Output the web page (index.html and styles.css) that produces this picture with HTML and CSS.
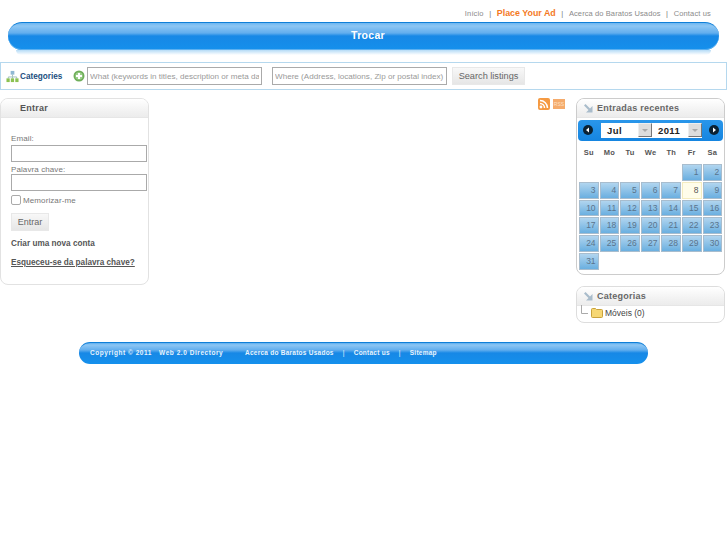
FILE: index.html
```html
<!DOCTYPE html>
<html lang="pt">
<head>
<meta charset="utf-8">
<title>Trocar</title>
<link rel="stylesheet" href="styles.css">
</head>
<body>
<nav class="topnav">
  <a class="nav-link">Início</a><span class="sep">|</span>
  <a class="nav-ad">Place Your Ad</a><span class="sep">|</span>
  <a class="nav-link nav-long">Acerca do Baratos Usados</a><span class="sep">|</span>
  <a class="nav-link">Contact us</a>
</nav>
<header class="banner"><h1 class="banner-title">Trocar</h1></header>
<div class="banner-shadow"></div>

<form class="search">
  <svg class="cat-icon" width="13" height="13" viewBox="0 0 14 14"><rect x="5" y="1" width="4" height="4" fill="#8fb8d4"/><path d="M7 5v2M2.500 9V7.500h9V9M7 7v2" stroke="#9bb" fill="none"/><rect x="0.500" y="9" width="3.500" height="4" fill="#8cc152"/><rect x="5.200" y="9" width="3.500" height="4" fill="#8cc152"/><rect x="10" y="9" width="3.500" height="4" fill="#8cc152"/></svg>
  <a class="cat-link">Categories</a>
  <svg class="plus-icon" width="12" height="12" viewBox="0 0 12 12"><circle cx="6" cy="6" r="5.500" fill="#6fae5a"/><circle cx="6" cy="6" r="3.800" fill="#9ccf8a"/><path d="M6 3v6M3 6h6" stroke="#fff" stroke-width="2"/></svg>
  <input class="field field-what" placeholder="What (keywords in titles, description or meta data)">
  <input class="field field-where" placeholder="Where (Address, locations, Zip or postal index)">
  <button class="btn btn-search" type="button">Search listings</button>
</form>

<main class="columns">
  <aside class="box box-login">
    <h2 class="box-head box-head-login">Entrar</h2>
    <div class="login-body">
      <label class="lbl lbl-email">Email:</label>
      <input class="login-input">
      <label class="lbl">Palavra chave:</label>
      <input class="login-input">
      <label class="remember"><span class="check"></span>Memorizar-me</label>
      <button class="btn btn-login" type="button">Entrar</button>
      <a class="login-new">Criar uma nova conta</a>
      <a class="login-forgot">Esqueceu-se da palavra chave?</a>
    </div>
  </aside>

  <section class="middle">
    <svg width="12" height="12" viewBox="0 0 12 12"><rect width="12" height="12" rx="2" fill="#f59a42"/><circle cx="3" cy="9" r="1.400" fill="#fff"/><path d="M2 5.500a4.500 4.500 0 0 1 4.500 4.500M2 2.500a7.500 7.500 0 0 1 7.500 7.500" stroke="#fff" stroke-width="1.500" fill="none"/></svg>
    <span class="rss-badge">RSS</span>
  </section>

  <aside class="right">
    <section class="box box-cal">
      <h2 class="box-head"><svg class="arrow" width="9" height="9" viewBox="0 0 9 9"><path d="M0 1.500 1.500 0 6 4.500 8.500 2v6.500H2L4.500 6z" fill="#a9bccb"/></svg>Entradas recentes</h2>
      <div class="cal-top">
        <span class="cal-nav"><svg width="10" height="10" viewBox="0 0 10 10"><circle cx="5" cy="5" r="5" fill="#0b2233"/><path d="M6 2.500v5L3 5z" fill="#fff"/></svg></span>
        <span class="cal-select cal-month">Jul<span class="cal-spin"><i></i></span></span>
        <span class="cal-select cal-year">2011<span class="cal-spin"><i></i></span></span>
        <span class="cal-nav"><svg width="10" height="10" viewBox="0 0 10 10"><circle cx="5" cy="5" r="5" fill="#0b2233"/><path d="M4 2.500v5L7 5z" fill="#fff"/></svg></span>
      </div>
      <div class="cal-grid">
        <span class="dow">Su</span><span class="dow">Mo</span><span class="dow">Tu</span><span class="dow">We</span><span class="dow">Th</span><span class="dow">Fr</span><span class="dow">Sa</span>
        <span class="blank"></span><span class="blank"></span><span class="blank"></span><span class="blank"></span><span class="blank"></span><span class="day">1</span><span class="day">2</span>
        <span class="day">3</span><span class="day">4</span><span class="day">5</span><span class="day">6</span><span class="day">7</span><span class="day today">8</span><span class="day">9</span>
        <span class="day">10</span><span class="day">11</span><span class="day">12</span><span class="day">13</span><span class="day">14</span><span class="day">15</span><span class="day">16</span>
        <span class="day">17</span><span class="day">18</span><span class="day">19</span><span class="day">20</span><span class="day">21</span><span class="day">22</span><span class="day">23</span>
        <span class="day">24</span><span class="day">25</span><span class="day">26</span><span class="day">27</span><span class="day">28</span><span class="day">29</span><span class="day">30</span>
        <span class="day">31</span>
      </div>
    </section>
    <section class="box box-cats">
      <h2 class="box-head"><svg class="arrow" width="9" height="9" viewBox="0 0 9 9"><path d="M0 1.500 1.500 0 6 4.500 8.500 2v6.500H2L4.500 6z" fill="#a9bccb"/></svg>Categorias</h2>
      <div class="cat-row">
        <svg class="tree" width="7" height="9" viewBox="0 0 7 9"><path d="M.5 0v8.500H7" stroke="#aaa" fill="none"/></svg>
        <svg class="folder" width="12" height="11" viewBox="0 0 12 11"><path d="M.5 2.500a1 1 0 0 1 1-1h3l1 1h5a1 1 0 0 1 1 1v6a1 1 0 0 1-1 1h-9a1 1 0 0 1-1-1z" fill="#f6d774" stroke="#c9a23c"/></svg>
        <span>Móveis (0)</span>
      </div>
    </section>
  </aside>
</main>

<footer class="footer">
  <span class="foot-copy">Copyright © 2011 &nbsp; Web 2.0 Directory</span>
  <a>Acerca do Baratos Usados</a><span class="foot-sep">|</span><a>Contact us</a><span class="foot-sep">|</span><a>Sitemap</a>
</footer>
</body>
</html>
```
FILE: styles.css
```css
* { box-sizing: border-box; }
html, body { margin: 0; padding: 0; }
body {
  background: #fff;
  font-family: "Liberation Sans", Arial, sans-serif;
  font-size: 8px;
  color: #666;
  width: 727px;
  height: 545px;
  overflow: hidden;
}
.topnav {
  display: flex;
  justify-content: flex-end;
  align-items: center;
  height: 22px;
  padding: 4px 16px 0 0;
  font-size: 7.500px;
  letter-spacing: .15px;
  color: #888;
}
.sep { margin: 0 5.500px; color: #777; }
.nav-link { color: #8a8a8a; }
.nav-long { letter-spacing: .1px; }
.nav-ad { color: #f47a1f; font-weight: bold; font-size: 8.900px; letter-spacing: 0; }
.banner {
  margin: 0 8px;
  height: 28px;
  width: 711px;
  border-radius: 14px;
  border-top: 1px solid #0f7fd8;
  background: linear-gradient(#6db6f0 0, #8cc6f4 3px, #62aeee 10px, #1788e6 13px, #1590ec 100%);
  display: flex;
  align-items: center;
  justify-content: center;
  box-shadow: inset 0 -1px 0 #5cb0f0;
}
.banner-title {
  margin: 0 0 4px 9px;
  font-size: 10.500px;
  letter-spacing: .3px;
  font-weight: bold;
  color: #fff;
}
.banner-shadow {
  margin: 0 16px;
  height: 5px;
  width: 695px;
  background: linear-gradient(#b5dbf6, #fff);
  border-radius: 0 0 12px 12px;
}
.search {
  margin-top: 7px;
  height: 28px;
  border: 1px solid #b5d8ee;
  display: flex;
  align-items: center;
  padding-left: 5px;
}
.cat-icon { flex: none; }
.cat-link { margin-left: 1px; width: 53px; font-weight: bold; font-size: 8.200px; color: #1c4f80; }
.plus-icon { flex: none; margin-right: 2px; }
.field {
  height: 18px;
  border: 1px solid #aaa;
  padding: 0 2px;
  font-family: inherit;
  font-size: 8.100px;
  color: #888;
  background: #fff;
  border-radius: 0;
  outline: 0;
}
.field::placeholder { color: #999; opacity: 1; }
.field-what { width: 175px; margin-right: 10px; }
.field-where { width: 175px; margin-right: 5px; }
.btn {
  display: block;
  border: 1px solid #e8e8e8;
  background: linear-gradient(#f8f8f8, #e6e6e6);
  color: #666;
  font-family: inherit;
  padding: 0;
}
.btn-search { width: 73px; height: 18px; font-size: 9.200px; }
.columns { display: flex; align-items: flex-start; margin-top: 8px; }
.box {
  border: 1px solid #e2e2e2;
  border-radius: 8px;
  background: #fff;
  overflow: hidden;
}
.box-login { width: 149px; height: 187px; flex: none; }
.box-head {
  margin: 0;
  height: 19px;
  background: linear-gradient(#fff, #f1f1f1 70%, #ececec);
  border-bottom: 1px solid #e6e6e6;
  font-size: 9px;
  font-weight: bold;
  letter-spacing: .25px;
  color: #666;
  display: flex;
  align-items: center;
  padding-left: 7px;
}
.box-head-login { padding-left: 19px; color: #555; }
.arrow { margin-right: 4px; flex: none; }
.login-body { padding: 16px 1px 0 10px; display: flex; flex-direction: column; align-items: flex-start; }
.lbl { font-size: 8px; line-height: 9px; color: #777; letter-spacing: .1px; }
.lbl-email { margin-bottom: 2px; }
.login-input { display: block; width: 136px; height: 17px; border: 1px solid #aaa; margin-bottom: 2px; padding: 0; border-radius: 0; background: #fff; }
.login-input + .lbl { margin-top: 1px; }
.remember { display: flex; align-items: center; font-size: 8px; color: #777; margin-top: 2px; letter-spacing: .1px; }
.check { display: block; width: 10px; height: 10px; border: 1px solid #aaa; border-radius: 2px; margin-right: 2px; }
.btn-login { width: 38px; height: 18px; font-size: 9px; margin-top: 8px; }
.login-new { margin-top: 8px; font-size: 8.200px; font-weight: bold; color: #555; }
.login-forgot { margin-top: 10px; font-size: 8.200px; font-weight: bold; color: #555; text-decoration: underline; }
.middle { flex: 1; display: flex; justify-content: flex-end; align-items: flex-start; gap: 3px; padding: 0 11px 0 0; }
.rss-badge { display: block; width: 12px; height: 10px; margin-top: 1px; background: #f5ab6c; color: #fde0c4; font-size: 5px; line-height: 10px; text-align: center; }
.right { width: 149px; flex: none; margin-right: 2px; display: flex; flex-direction: column; gap: 11px; }
.box-cal { height: 177px; padding-bottom: 4px; border-color: #ccc; }
.cal-top {
  margin: 2px 1px 0;
  height: 21px;
  background: linear-gradient(#2a96ea, #1585e0);
  border-radius: 4px;
  display: flex;
  align-items: center;
  padding: 0 0 1px 5px;
}
.cal-nav { display: block; width: 10px; height: 10px; margin-top: -1px; }
.cal-nav svg { display: block; }
.cal-select {
  display: flex;
  align-items: center;
  justify-content: space-between;
  height: 15px;
  background: #fff;
  font-size: 9.500px;
  font-weight: bold;
  letter-spacing: .4px;
  color: #222;
  padding-left: 6px;
}
.cal-month { width: 51px; margin-left: 8px; }
.cal-year { width: 50px; margin-right: 7px; }
.cal-spin { width: 14px; height: 14px; background: #ddd; border: 1px solid #777; border-top-color: #eee; border-left-color: #eee; display: flex; align-items: center; justify-content: center; }
.cal-spin i { display: block; border: 3px solid transparent; border-top-color: #aaa; border-bottom: 0; }
.cal-grid {
  margin: 0 0 0 2px;
  display: grid;
  grid-template-columns: repeat(7, 19.600px);
  grid-template-rows: 21px repeat(6, 16.800px);
  column-gap: 1px;
  row-gap: 1px;
  padding-top: 1px;
}
.dow { display: flex; align-items: center; justify-content: center; font-size: 7.500px; font-weight: bold; color: #555; letter-spacing: .2px; margin-top: 0; }
.day {
  background: linear-gradient(#b1d5ef, #6aafe0);
  border: 1px solid #a8bdce;
  font-size: 8.500px;
  text-align: right;
  line-height: 15px;
  padding-right: 2px;
  color: #5a748c;
}
.today { background: #fffdea; border-color: #f4ecc0; color: #555; }
.box-cats { height: 37px; border-color: #ddd; }
.cat-row { display: flex; align-items: center; height: 13px; padding-left: 4px; font-size: 8.500px; color: #444; }
.tree { margin-top: -6px; margin-right: 3px; }
.folder { margin-right: 2px; }
.footer {
  margin: 0 0 0 79px;
  position: absolute;
  top: 342px;
  width: 569px;
  height: 22px;
  border-radius: 11px;
  border-top: 1px solid #0f7fd8;
  background: linear-gradient(#5eaeee 0, #8cc6f4 2px, #62aeee 7px, #1788e6 10px, #1590ec 100%);
  color: #e8f4fd;
  font-size: 6.500px;
  font-weight: bold;
  letter-spacing: .25px;
  display: flex;
  align-items: center;
  padding: 0 0 2px 11px;
}
.foot-copy { width: 155px; flex: none; letter-spacing: .55px; }
.foot-sep { margin: 0 9px; font-weight: normal; }
```
